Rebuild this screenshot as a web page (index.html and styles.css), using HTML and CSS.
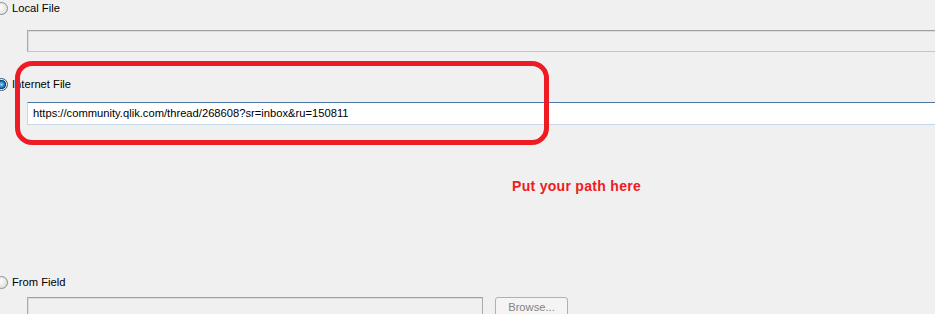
FILE: index.html
```html
<!DOCTYPE html>
<html lang="en">
<head>
	<meta charset="UTF-8">
	<title>Data source</title>
	<link rel="stylesheet" href="styles.css">
</head>
<body>
	<div class="panel">
		<label class="option">
			<span class="radio"></span>
			<span class="option_name">Local File</span>
		</label>
		<div class="field field_local"></div>

		<label class="option option_internet">
			<span class="radio checked"></span>
			<span class="option_name">Internet File</span>
		</label>
		<div class="field field_url">https://community.qlik.com/thread/268608?sr=inbox&amp;ru=150811</div>

		<p class="note">Put your path here</p>

		<label class="option option_from">
			<span class="radio"></span>
			<span class="option_name">From Field</span>
		</label>
		<div class="from_row">
			<div class="field field_from"></div>
			<span class="browse">Browse...</span>
		</div>

		<!-- annotation drawn over the screenshot -->
		<div class="mark"></div>
	</div>
</body>
</html>
```

FILE: styles.css
```css
html,body{
	margin: 0;
	height: 100%;
}
body{
	background: #f0f0f0;
	font-family: "Liberation Sans", Arial, sans-serif;
	font-size: 11.2px;
	color: #000;
	overflow: hidden;
}
.panel{
	position: relative;
	height: 100%;
}
.option{
	display: flex;
	align-items: center;
	height: 16px;
}
.radio{
	width: 11px;
	height: 11px;
	margin-left: -5px;
	margin-right: 4px;
	border: 1px solid #8e8f8f;
	border-radius: 50%;
	background: radial-gradient(circle at 40% 40%, #fdfdfd 0%, #e6e6e6 60%, #cfcfcf 100%);
	flex: none;
}
.radio.checked{
	border-color: #3c5a7a;
	background: radial-gradient(circle, #9fdcfb 0%, #1f7fc4 35%, #0f3f6e 55%, #e9e9e9 62%, #d3d3d3 100%);
}
.option_name{
	line-height: 16px;
}
.field{
	box-sizing: border-box;
	margin-left: 27px;
	background: #f0f0f0;
	border: 1px solid #ababab;
	border-top-color: #a0a0a0;
	border-bottom-color: #c6c6c6;
	box-shadow: inset 1px 1px 0 #dcdcdc;
}
.field_local{
	margin-top: 14px;
	height: 22px;
	border-right: none;
}
.option_internet{
	margin-top: 24px;
}
.field_url{
	margin-top: 10px;
	height: 23px;
	background: #fff;
	border: 1px solid #c5d8ea;
	border-top-color: #4c79a6;
	border-right: none;
	box-shadow: none;
	padding-left: 5px;
	line-height: 21px;
	white-space: nowrap;
}
.note{
	margin: 53px 0 0 512px;
	height: 16px;
	line-height: 16px;
	color: #ed1c24;
	font-weight: bold;
	font-size: 14px;
	letter-spacing: 0.3px;
}
.option_from{
	margin-top: 80px;
}
.from_row{
	display: flex;
	align-items: flex-start;
	gap: 12px;
	margin-top: 7px;
}
.field_from{
	width: 456px;
	height: 22px;
	flex: none;
}
.browse{
	box-sizing: border-box;
	width: 73px;
	height: 24px;
	border: 1px solid #adb2b5;
	border-radius: 3px;
	background: #f4f4f4;
	color: #838383;
	text-align: center;
	line-height: 18px;
}
.mark{
	position: absolute;
	left: 15px;
	top: 61px;
	width: 534px;
	height: 84px;
	box-sizing: border-box;
	border: 5px solid #ed1c24;
	border-radius: 17px;
}
```
